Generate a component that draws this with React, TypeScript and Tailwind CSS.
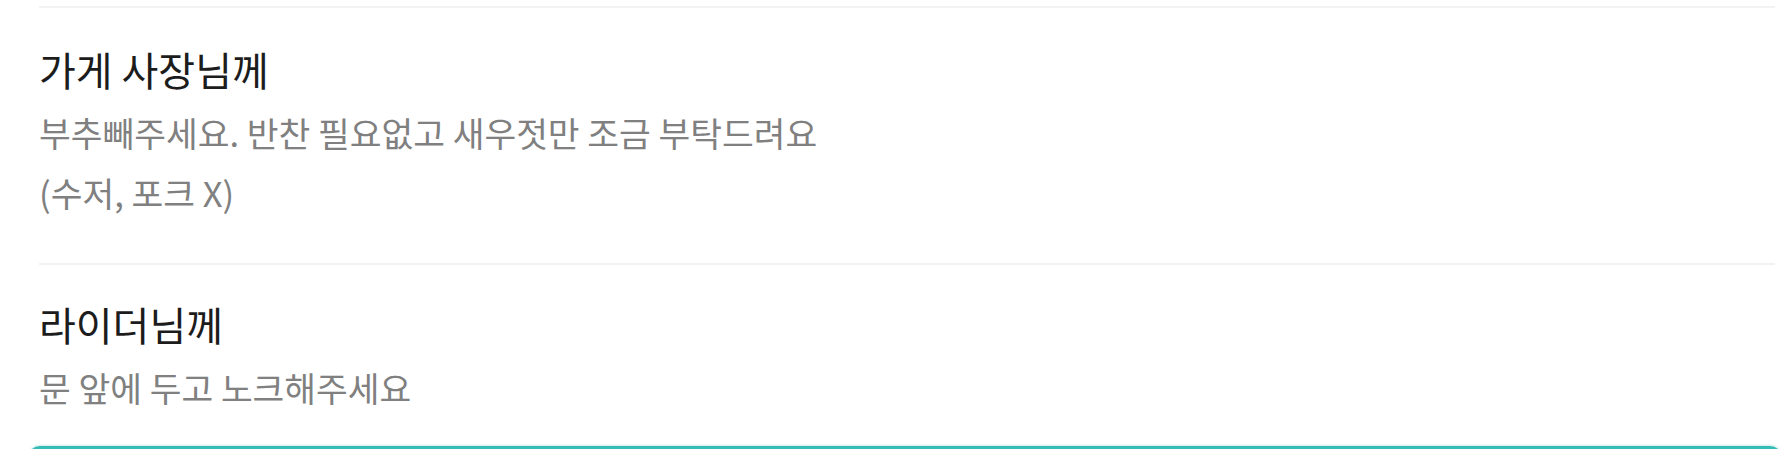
import React from "react";

interface Note {
  title: string;
  lines: string[];
}

const notes: Note[] = [
  {
    title: "가게 사장님께",
    lines: ["부추빼주세요. 반찬 필요없고 새우젓만 조금 부탁드려요", "(수저, 포크 X)"],
  },
  {
    title: "라이더님께",
    lines: ["문 앞에 두고 노크해주세요"],
  },
];

export default function App() {
  return (
    <div className="w-[1783px] h-[449px] overflow-hidden bg-white font-['Noto_Sans_CJK_KR','Noto_Sans',sans-serif]">
      <div className="pl-[39px] pr-[8px] pt-[6px]">
        {/* Request notes */}
        <section className="border-t-2 border-[#f2f2f2] pt-[28px] pb-[41px]">
          <h2 className="text-[40px] leading-[66px] text-[#1c1c1c]">{notes[0].title}</h2>
          {notes[0].lines.map((line, i) => (
            <p key={i} className="text-[34.5px] leading-[60px] text-[#808080]">
              {line}
            </p>
          ))}
        </section>
        <section className="border-t-2 border-[#f2f2f2] pt-[26px] pb-[29px]">
          <h2 className="text-[40px] leading-[66px] text-[#1c1c1c]">{notes[1].title}</h2>
          {notes[1].lines.map((line, i) => (
            <p key={i} className="text-[34.5px] leading-[60px] text-[#808080]">
              {line}
            </p>
          ))}
        </section>
      </div>

      {/* Bottom action button */}
      <div className="ml-[28px] mr-[1px] h-[80px] rounded-[12px] bg-[#35bcb6] shadow-[0_-1px_2px_rgba(53,188,182,0.25)]" />
    </div>
  );
}
